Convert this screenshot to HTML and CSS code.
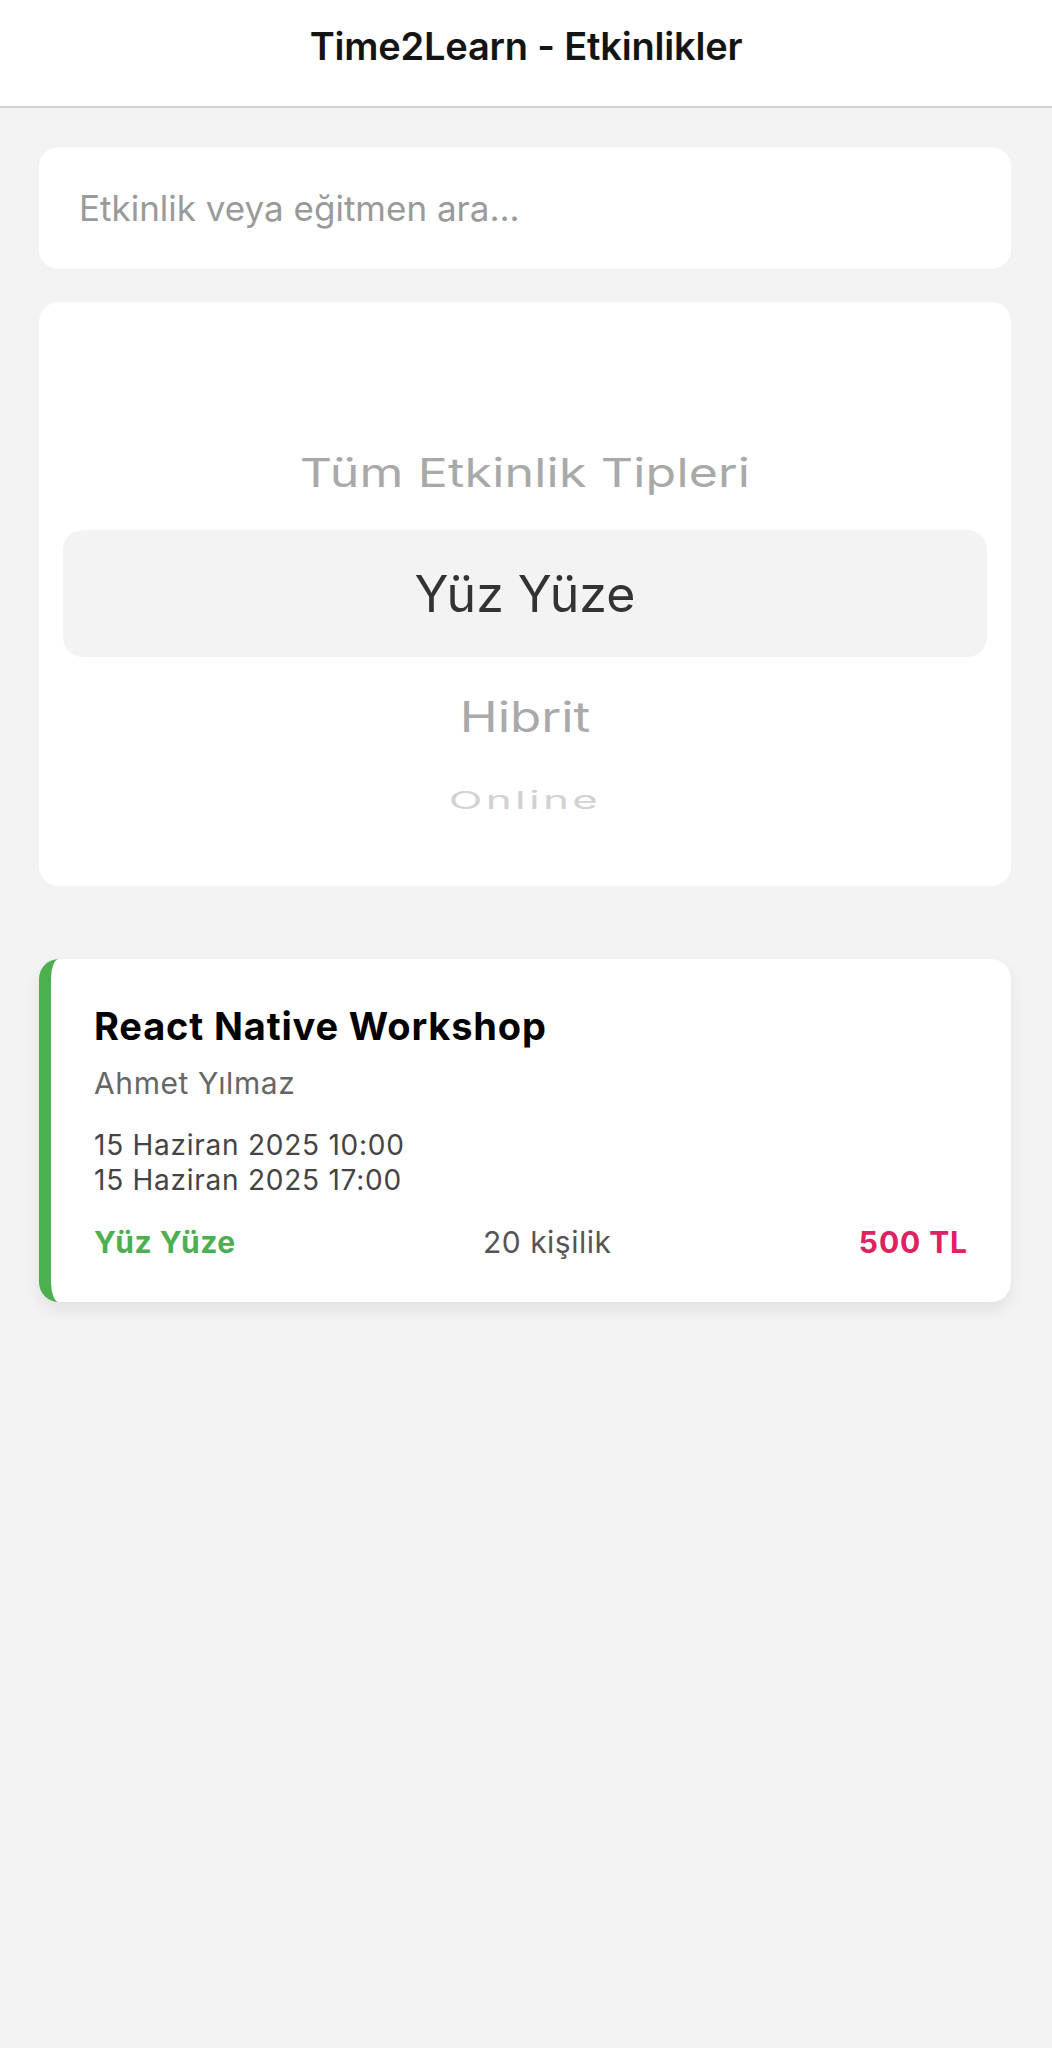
FILE: index.html
```html
<!DOCTYPE html>
<html lang="tr">
<head>
<meta charset="utf-8">
<title>Time2Learn - Etkinlikler</title>
<link rel="stylesheet" href="styles.css">
</head>
<body>
<header class="topbar">
  <h1 class="topbar-title">Time2Learn - Etkinlikler</h1>
</header>
<main class="content">
  <div class="search">
    <input class="search-input" type="text" placeholder="Etkinlik veya eğitmen ara...">
  </div>
  <div class="picker">
    <div class="picker-item picker-item--above">Tüm Etkinlik Tipleri</div>
    <div class="picker-selected">Yüz Yüze</div>
    <div class="picker-item picker-item--below">Hibrit</div>
    <div class="picker-item picker-item--far">Online</div>
  </div>
  <article class="event">
    <h2 class="event-title">React Native Workshop</h2>
    <p class="event-trainer">Ahmet Yılmaz</p>
    <div class="event-dates">
      <div>15 Haziran 2025 10:00</div>
      <div>15 Haziran 2025 17:00</div>
    </div>
    <div class="event-footer">
      <span class="event-type">Yüz Yüze</span>
      <span class="event-capacity">20 kişilik</span>
      <span class="event-price">500 TL</span>
    </div>
  </article>
</main>
</body>
</html>
```
FILE: styles.css
```css
* { box-sizing: border-box; }
html, body { margin: 0; padding: 0; }
body {
  background: #f3f3f3;
  font-family: Inter, "Noto Sans", "Liberation Sans", sans-serif;
  color: #000;
  min-height: 2048px;
}
.topbar {
  height: 108px;
  background: #fff;
  border-bottom: 2px solid #d4d4d4;
  display: flex;
  justify-content: center;
  align-items: center;
  padding-bottom: 14px;
}
.topbar-title {
  margin: 0;
  font-size: 38px;
  font-weight: 600;
  color: #141414;
  letter-spacing: -0.2px;
}
.content {
  padding: 39px 41px 0 39px;
}
.search {
  height: 122px;
  background: #fff;
  border-radius: 20px;
  display: flex;
  align-items: center;
  padding: 0 40px;
}
.search-input {
  border: 0;
  outline: none;
  background: transparent;
  width: 100%;
  font-family: Inter, "Noto Sans", sans-serif;
  font-size: 35px;
  color: #333;
  padding: 0;
}
.search-input::placeholder { color: #9a9a9a; }
.picker {
  margin-top: 33px;
  height: 584px;
  background: #fff;
  border-radius: 20px;
  padding: 141px 24px 0;
  display: flex;
  flex-direction: column;
  align-items: stretch;
}
.picker-item {
  text-align: center;
  display: flex;
  align-items: center;
  justify-content: center;
}
.picker-item--above {
  height: 60px;
  font-size: 50px;
  letter-spacing: 0.2px;
  color: #a9a9a9;
  transform: scaleY(0.8);
}
.picker-selected {
  margin-top: 27px;
  height: 127px;
  border-radius: 20px;
  background: #f3f3f3;
  display: flex;
  align-items: center;
  justify-content: center;
  font-size: 50px;
  color: #333;
}
.picker-item--below {
  margin-top: 29px;
  height: 60px;
  font-size: 51px;
  color: #a9a9a9;
  transform: scaleY(0.82);
}
.picker-item--far {
  margin-top: 39px;
  height: 30px;
  font-size: 44px;
  letter-spacing: 3.3px;
  color: #d2d2d2;
  transform: scaleY(0.55);
}
.event {
  margin-top: 73px;
  background: #fff;
  border-radius: 20px;
  border-left: 12px solid #4caf50;
  padding: 45px 43px 42px 43px;
  box-shadow: 0 8px 16px rgba(0, 0, 0, 0.07);
}
.event-title {
  margin: 0;
  font-size: 38px;
  line-height: 44px;
  font-weight: 700;
  color: #000;
  letter-spacing: 0.85px;
}
.event-trainer {
  margin: 17px 0 0;
  font-size: 30px;
  line-height: 36px;
  color: #666;
  letter-spacing: 0.6px;
}
.event-dates {
  margin-top: 27px;
  font-size: 28px;
  line-height: 35px;
  color: #444;
  letter-spacing: 0.75px;
}
.event-footer {
  margin-top: 26px;
  display: flex;
  justify-content: space-between;
  align-items: baseline;
  font-size: 30px;
  line-height: 36px;
  letter-spacing: 0.5px;
}
.event-type { color: #4caf50; font-weight: 700; }
.event-capacity { color: #555; }
.event-price { color: #e0215f; font-weight: 700; letter-spacing: 0.9px; }
```
